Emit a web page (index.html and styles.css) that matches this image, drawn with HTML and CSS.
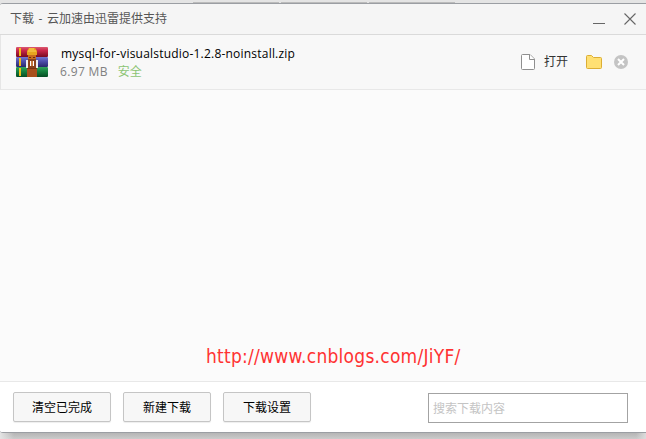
FILE: index.html
```html
<!DOCTYPE html>
<html lang="zh-CN">
<head>
<meta charset="utf-8">
<title>下载</title>
<link rel="stylesheet" href="styles.css">
</head>
<body>
<div class="backdrop"><i></i><i></i><i></i></div>
<main class="window">
  <header class="titlebar">
    <h1 class="title">下载 - 云加速由迅雷提供支持</h1>
    <svg class="controls" width="44" height="14" viewBox="0 0 44 14" fill="none" stroke="#666"><path d="M0 11.5h12"/><path d="M31.5 1.5l11 11M42.5 1.5l-11 11" stroke-width="1.1"/></svg>
  </header>
  <section class="item">
    <svg class="archive" width="32" height="30" viewBox="0 0 32 30">
      <defs>
        <linearGradient id="r" x2="0" y2="1"><stop stop-color="#dc5a70"/><stop offset=".35" stop-color="#c8264a"/><stop offset="1" stop-color="#780a20"/></linearGradient>
        <linearGradient id="b" x2="0" y2="1"><stop stop-color="#7476d0"/><stop offset=".4" stop-color="#4f51ae"/><stop offset="1" stop-color="#28286c"/></linearGradient>
        <linearGradient id="g" x2="0" y2="1"><stop stop-color="#34a45c"/><stop offset=".4" stop-color="#168441"/><stop offset="1" stop-color="#064c24"/></linearGradient>
      </defs>
      <rect width="32" height="10" rx="1" fill="url(#r)"/>
      <rect y="10" width="32" height="10" rx="1" fill="url(#b)"/>
      <rect y="20" width="32" height="10" rx="1" fill="url(#g)"/>
      <path d="M3 1h2v8H3zM3 11h2v8H3zM3 21h2v8H3z" fill="#f0bd18"/>
      <path d="M11 20h10v10H11z" fill="#a9501c"/>
      <path d="M11 21h10v1H11z" fill="#793410"/>
      <path d="M11 8V4l2-3h6l2 3v4z" fill="#e7a51e"/>
      <path d="M12 4h8M13 2h5" stroke="#fbd35a"/>
      <path d="M12 8h8v5h-8z" fill="#c86c1c"/>
      <path d="M13 10h2v1h-2zM17 10h2v1h-2z" fill="#6b2b10"/>
      <path d="M10 13h12v8H10z" fill="#eee"/>
      <path d="M12 12h8v9h-8z" fill="#8a431c"/>
      <path d="M14 14h1v5h-1zM17 14h1v5h-1z" fill="#fff"/>
      <path d="M15 14h2v5h-2z" fill="#c87a3c"/>
    </svg>
    <div class="info">
      <div class="name">mysql-for-visualstudio-1.2.8-noinstall.zip</div>
      <div class="meta"><span class="size">6.97 MB</span><span class="safe">安全</span></div>
    </div>
    <div class="actions">
      <svg class="file" width="14" height="16" viewBox="0 0 14 16" fill="#fff" stroke="#8f8f8f"><path d="M.5 1.5q0-1 1-1H9l4.500 4.500v9.500q0 1-1 1h-11q-1 0-1-1z"/><path d="M8.500.500V5.500h5"/></svg>
      <span class="open">打开</span>
      <svg class="folder" width="16" height="14" viewBox="0 0 16 14" fill="#ffe073" stroke="#dcae35"><path d="M.5 1.500q0-1 1-1h4l2 2h7q1 0 1 1v9q0 1-1 1h-13q-1 0-1-1z"/></svg>
      <svg class="remove" width="14" height="14" viewBox="0 0 14 14"><circle cx="7" cy="7" r="7" fill="#c4c4c4"/><path d="M4 4l6 6M10 4l-6 6" stroke="#fff" stroke-width="2"/></svg>
    </div>
  </section>
  <section class="list"><p class="watermark">http://www.cnblogs.com/JiYF/</p></section>
  <footer class="footer">
    <button class="btn wide">清空已完成</button>
    <button class="btn">新建下载</button>
    <button class="btn">下载设置</button>
    <input class="search" type="text" placeholder="搜索下载内容">
  </footer>
</main>
<div class="shadow"></div>
</body>
</html>
```
FILE: styles.css
```css
* { box-sizing: border-box; }
body {
  margin: 0;
  height: 439px;
  overflow: hidden;
  background: #e4e4e4;
  color: #000;
  font: 12px/16px "Open Sans", "Noto Sans CJK SC", sans-serif;
}
svg { display: block; flex: none; }
.backdrop {
  display: flex;
  gap: 2px;
  align-items: flex-end;
  height: 3px;
  padding-left: 193px;
  background: #e4e4e4;
}
.backdrop i { width: 86px; height: 1px; background: #bbb; }
.window {
  display: flex;
  flex-direction: column;
  height: 430px;
  border: solid #9b9ea3;
  border-width: 1px 0;
  border-radius: 3px 0 0 3px;
  background: #fbfbfb;
  overflow: hidden;
}
.titlebar {
  display: flex;
  justify-content: space-between;
  height: 31px;
  padding: 7px 9px 0 10px;
  background: #f5f5f5;
  border-bottom: 1px solid #dadada;
}
.title { margin: 0; font-size: 12px; font-weight: 400; line-height: 16px; word-spacing: 1.5px; color: #555; }
.controls { margin-top: 1px; }
.item {
  display: flex;
  height: 55px;
  padding: 12px 18px 0 15px;
  background: #f8f8f8;
  border-left: 1px solid #e6e6e6;
  border-bottom: 1px solid #e8e8e8;
}
.info { margin: -1px 0 0 13px; }
.name { line-height: 16px; letter-spacing: .21px; white-space: nowrap; }
.meta { display: flex; gap: 10px; margin: 2px 0 0 -1px; color: #808080; }
.size { letter-spacing: .35px; }
.safe { color: #8cc474; }
.actions { display: flex; align-items: center; height: 30px; margin-left: auto; }
.open { margin: 0 18px 0 9px; color: #333; }
.folder { margin-right: 12px; }
.list { flex: 1; padding: 254px 0 0 206px; border-bottom: 1px solid #e8e8e8; }
.watermark {
  margin: 0;
  color: #ff3232;
  font: 19px/24px "DejaVu Sans Condensed", "DejaVu Sans", sans-serif;
  letter-spacing: .25px;
  white-space: nowrap;
}
.footer {
  display: flex;
  gap: 12px;
  height: 50px;
  padding: 10px 18px 0 13px;
  background: #fff;
}
.btn {
  width: 88px;
  height: 30px;
  padding: 2px 0 0;
  border: 1px solid #c5c5c5;
  border-radius: 2px;
  background: #f7f7f7;
  box-shadow: 0 1px 1px #eee;
  color: #000;
  font: inherit;
}
.wide { width: 98px; }
.search {
  width: 200px;
  height: 30px;
  margin: 1px 0 0 auto;
  padding: 0 4px;
  border: 1px solid #a3a3a3;
  border-radius: 0;
  font: inherit;
}
.search::placeholder { color: #c4c4c4; opacity: 1; }
.shadow {
  height: 6px;
  background: linear-gradient(90deg, #e4e4e4, transparent 14px calc(100% - 10px), #dcdcdc), linear-gradient(#b5b5b5, #cbcbcb);
}
```
